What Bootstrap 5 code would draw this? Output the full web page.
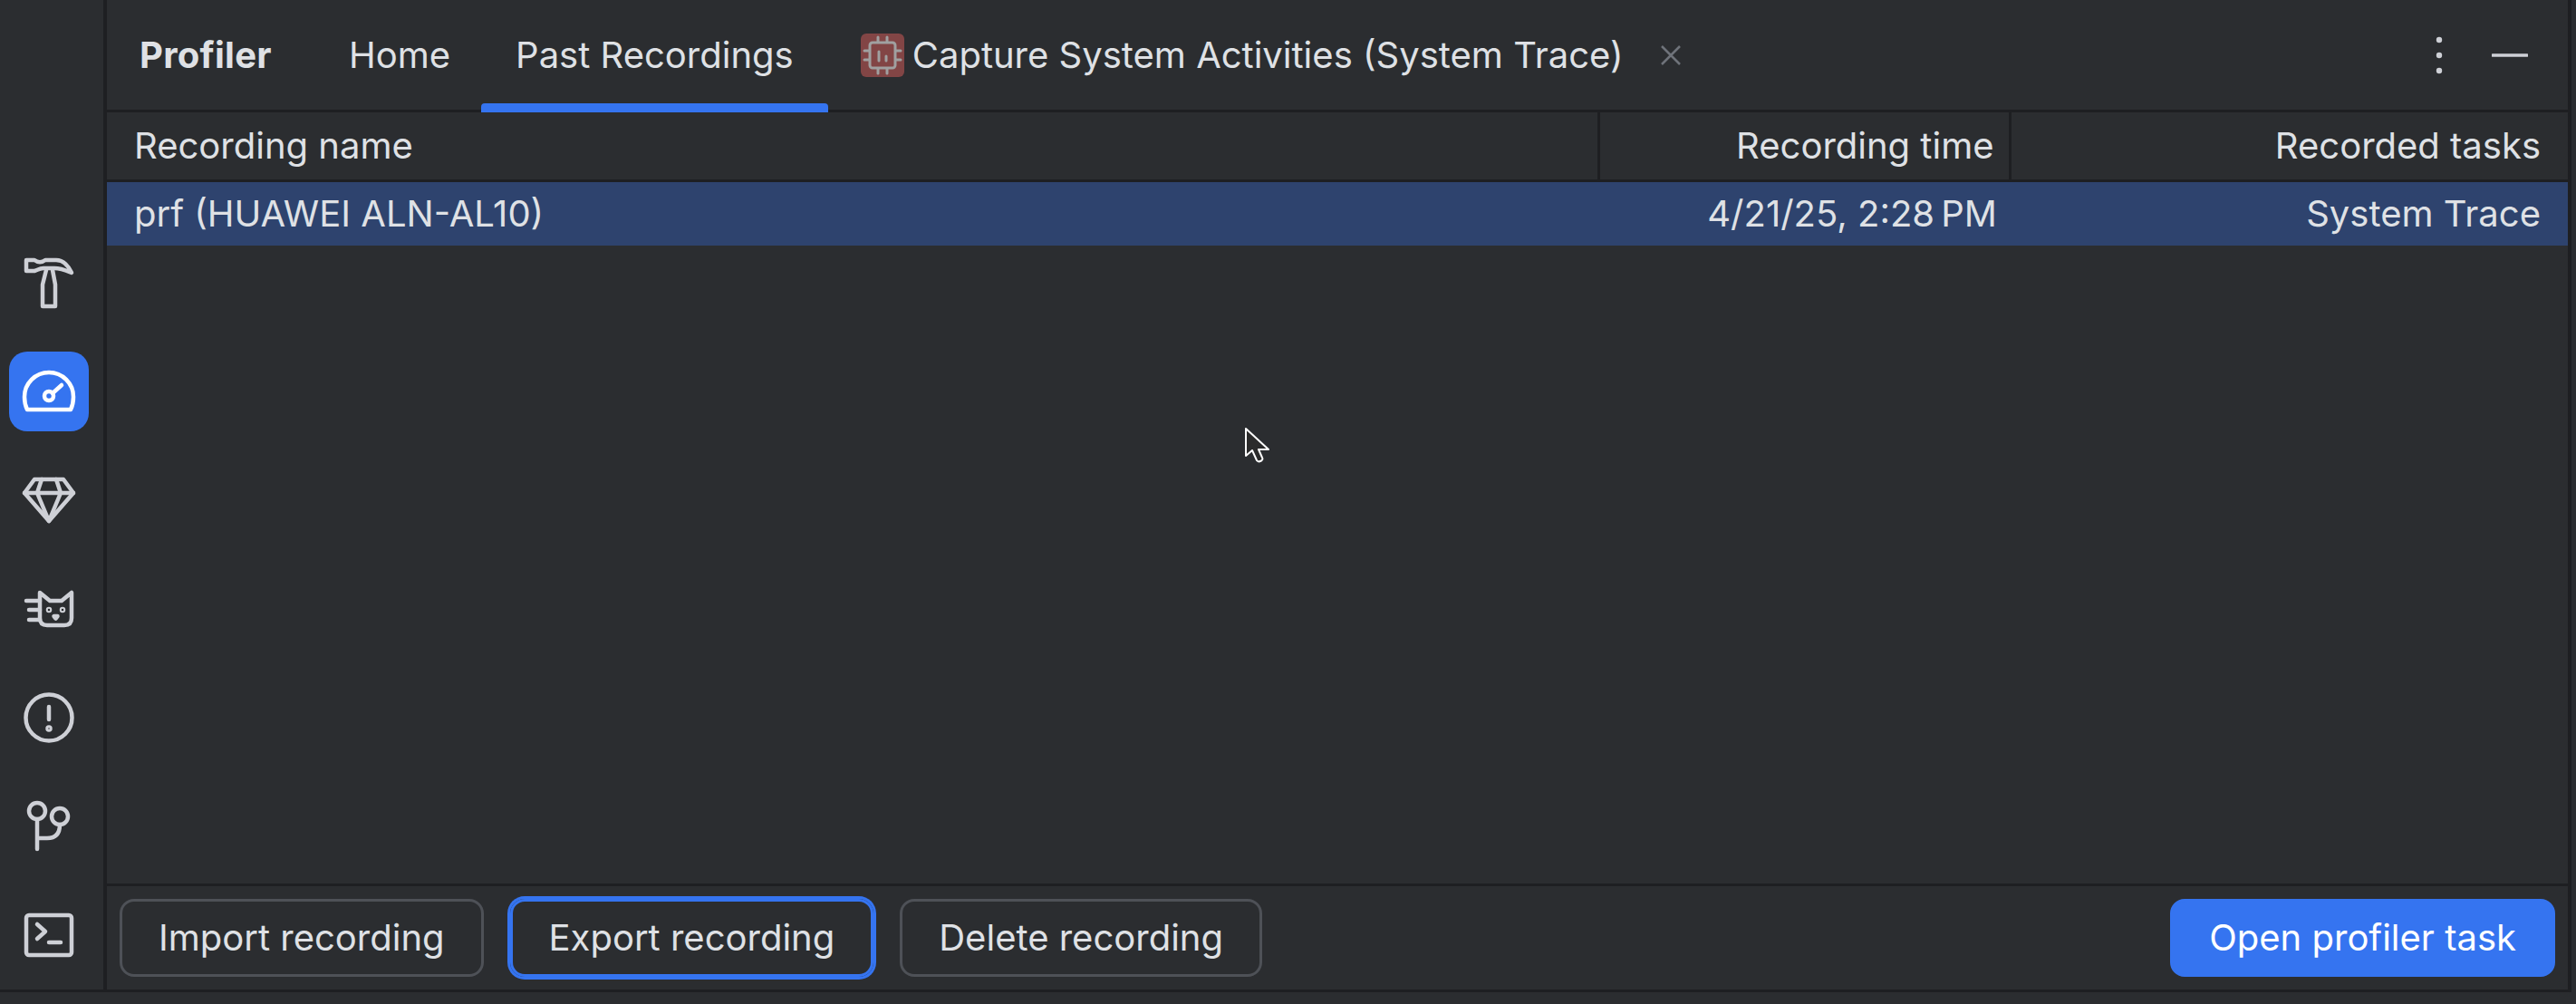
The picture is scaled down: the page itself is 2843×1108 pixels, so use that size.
<!DOCTYPE html>
<html lang="en">
<head>
    <meta charset="UTF-8">
    <title>Profiler</title>
    <link href="https://cdn.jsdelivr.net/npm/bootstrap@5.3.0/dist/css/bootstrap.min.css" rel="stylesheet">
    <style>
        html, body { height: 100%; }
        body { background: #2b2d30; color: #dfe1e5; font-family: Inter, "Liberation Sans", sans-serif; font-size: 40px; overflow: hidden; }
        .ide-shell { height: 1095px; border-bottom: 3px solid #1e1f22; margin-right: 5px; }
        .ide-rail { width: 118px; border-right: 4px solid #1e1f22; padding-top: 268px; gap: 32px; }
        .rail-item { width: 88px; height: 88px; margin-left: 10px; border-radius: 20px; }
        .rail-item svg { fill: none; stroke: #ced0d6; stroke-width: 4.5; stroke-linecap: round; stroke-linejoin: round; }
        .rail-item.is-on { background: #3574f0; }
        .rail-item.is-on svg { stroke: #fff; }
        .ide-main { border-right: 4px solid #1e1f22; min-width: 0; }
        .tool-head { height: 124px; border-bottom: 3px solid #1e1f22; padding-left: 36px; line-height: 1; }
        .tool-title { font-weight: 700; width: 193px; letter-spacing: .25px; }
        .tool-tab { padding: 0 38px; height: 100%; position: relative; color: #dfe1e5; }
        .tool-tab.tab-first { padding-right: 34px; }
        .tool-tab.is-on::after { content: ""; position: absolute; left: 0; right: 0; bottom: -3px; height: 10px; background: #3574f0; border-radius: 4px 4px 0 0; }
        .tab-plain { padding-left: 36px; gap: 9px; }
        .tab-x { margin-left: 40px; }
        .tool-actions { margin-left: auto; padding-right: 44px; gap: 54px; }
        .rec-table { table-layout: fixed; width: 100%; margin: 0; --bs-table-bg: transparent; --bs-table-color: #dfe1e5; }
        .rec-table th, .rec-table td { font-weight: 400; padding: 0; height: 72px; vertical-align: middle; border: 0; line-height: 1; white-space: nowrap; }
        .rec-table th { border-bottom: 3px solid #1e1f22; height: 75px; }
        .rec-table th + th { border-left: 3px solid #1e1f22; }
        .rec-table .col-pad { padding-left: 30px; }
        .rec-table th.col-time { padding-right: 16px; text-align: right; }
        .rec-table td.col-time { padding-right: 14px; text-align: right; }
        .rec-table .col-task { padding-right: 30px; text-align: right; }
        .rec-table tr.is-picked td { background: #2e436e; color: #dfe1e5; }
        .rec-body { flex: 1 1 auto; min-height: 0; }
        .rec-foot { height: 117px; border-top: 3px solid #1e1f22; padding: 14px 14px 0; gap: 29px; }
        .foot-btn { height: 86px; font-size: 40px; line-height: 1; padding: 0 40px; border-radius: 16px; color: #dfe1e5; background: transparent; border: 3px solid #4e5157; white-space: nowrap; }
        .foot-btn.is-focus { border-color: #3574f0; box-shadow: 0 0 0 3px #3574f0; }
        .foot-btn.is-main { margin-left: auto; background: #3574f0; border-color: #3574f0; color: #fff; }
        .mouse-arrow { position: absolute; left: 1372px; top: 470px; }
    </style>
</head>
<body>
    <div class="ide-shell d-flex">
        <div class="ide-rail d-flex flex-column flex-shrink-0">
            <div class="rail-item d-flex align-items-center justify-content-center">
                <svg width="60" height="60" viewBox="24 282 60 60"><path d="M29 287H38C42 290 46 290 50 287H62C70 287 76 294 79 301C74 299 68 296 60 296H48C44 296 41 298 38 299H29Z"/><path d="M51 298L47 314V338H61V314L58 298"/></svg>
            </div>
            <div class="rail-item is-on d-flex align-items-center justify-content-center">
                <svg width="60" height="60" viewBox="24 402 60 60"><path d="M30 452H78C81 446 81 442 81 438A27 27 0 0 0 27 438C27 442 27 446 30 452Z"/><circle cx="54" cy="437" r="5"/><path d="M58 434L68 425"/></svg>
            </div>
            <div class="rail-item d-flex align-items-center justify-content-center">
                <svg width="60" height="60" viewBox="24 522 60 60"><path d="M38 529H70L81 544L54 575L27 544Z"/><path d="M27 544H81M46 529L41 544L54 575L67 544L62 529"/></svg>
            </div>
            <div class="rail-item d-flex align-items-center justify-content-center">
                <svg width="60" height="60" viewBox="24 644 60 60"><path d="M44 656L55 665H68L79 656V684Q79 692 71 692H52Q44 692 44 684Z"/><path d="M29 665H44M32 675H44M32 686H44"/><circle cx="54" cy="675" r="1"/><circle cx="69" cy="675" r="1"/><path d="M59.500 682H63.500L61.500 684.500Z"/></svg>
            </div>
            <div class="rail-item d-flex align-items-center justify-content-center">
                <svg width="60" height="60" viewBox="24 762 60 60"><circle cx="54" cy="792" r="25.500"/><path d="M54 780V794"/><circle cx="54" cy="804" r="1.500"/></svg>
            </div>
            <div class="rail-item d-flex align-items-center justify-content-center">
                <svg width="60" height="60" viewBox="24 882 60 60"><circle cx="41" cy="895" r="9"/><circle cx="66" cy="901" r="9"/><path d="M41 904V937M41 925H52Q66 925 66 910"/></svg>
            </div>
            <div class="rail-item d-flex align-items-center justify-content-center">
                <svg width="60" height="60" viewBox="24 1002 60 60"><rect x="29" y="1010" width="50" height="44" rx="3"/><path d="M41 1020L50 1028L41 1036M54 1040H67"/></svg>
            </div>
        </div>

        <div class="ide-main d-flex flex-column flex-grow-1">
            <div class="tool-head d-flex align-items-center flex-shrink-0">
                <div class="tool-title">Profiler</div>
                <div class="tool-tab tab-first d-flex align-items-center">Home</div>
                <div class="tool-tab is-on d-flex align-items-center">Past Recordings</div>
                <div class="tab-plain d-flex align-items-center">
                    <svg width="48" height="48" viewBox="0 0 48 48">
                        <rect width="48" height="48" rx="6" fill="#824545"/>
                        <g fill="none" stroke="#a0a0a0" stroke-width="3" stroke-linecap="round">
                            <rect x="10" y="10" width="28" height="28" rx="3"/>
                            <path d="M19 4V9M29 4V9M19 39V44M29 39V44M4 19H9M4 29H9M39 19H44M39 29H44M20 20V30M28 25V30"/>
                        </g>
                    </svg>
                    <span>Capture System Activities (System Trace)</span>
                </div>
                <svg class="tab-x" width="24" height="24" viewBox="0 0 24 24"><path d="M2 2L22 22M22 2L2 22" stroke="#6f737a" stroke-width="2.500" fill="none"/></svg>
                <div class="tool-actions d-flex align-items-center">
                    <svg width="8" height="44" viewBox="0 0 8 44"><circle cx="4" cy="5" r="3.200" fill="#ced0d6"/><circle cx="4" cy="22" r="3.200" fill="#ced0d6"/><circle cx="4" cy="39" r="3.200" fill="#ced0d6"/></svg>
                    <svg width="40" height="6" viewBox="0 0 40 6"><path d="M1 3H39" stroke="#ced0d6" stroke-width="3.500" stroke-linecap="round"/></svg>
                </div>
            </div>

            <div class="rec-body">
                <table class="table rec-table">
                    <colgroup><col style="width:1646px"><col style="width:454px"><col></colgroup>
                    <thead>
                        <tr>
                            <th class="col-pad">Recording name</th>
                            <th class="col-time">Recording time</th>
                            <th class="col-task">Recorded tasks</th>
                        </tr>
                    </thead>
                    <tbody>
                        <tr class="is-picked">
                            <td class="col-pad">prf (HUAWEI ALN-AL10)</td>
                            <td class="col-time">4/21/25, 2:28&#8239;PM</td>
                            <td class="col-task">System Trace</td>
                        </tr>
                    </tbody>
                </table>
            </div>

            <div class="rec-foot d-flex align-items-start flex-shrink-0">
                <button type="button" class="btn foot-btn">Import recording</button>
                <button type="button" class="btn foot-btn is-focus">Export recording</button>
                <button type="button" class="btn foot-btn">Delete recording</button>
                <button type="button" class="btn foot-btn is-main">Open profiler task</button>
            </div>
        </div>
    </div>

    <svg class="mouse-arrow" width="32" height="44" viewBox="0 0 32 44">
        <path d="M3 3V33L10 27L15 38C17 41 23 38 21 35L17 26H28Z" fill="#2b2b2b" stroke="#fff" stroke-width="2" stroke-linejoin="round"/>
    </svg>
</body>
</html>
